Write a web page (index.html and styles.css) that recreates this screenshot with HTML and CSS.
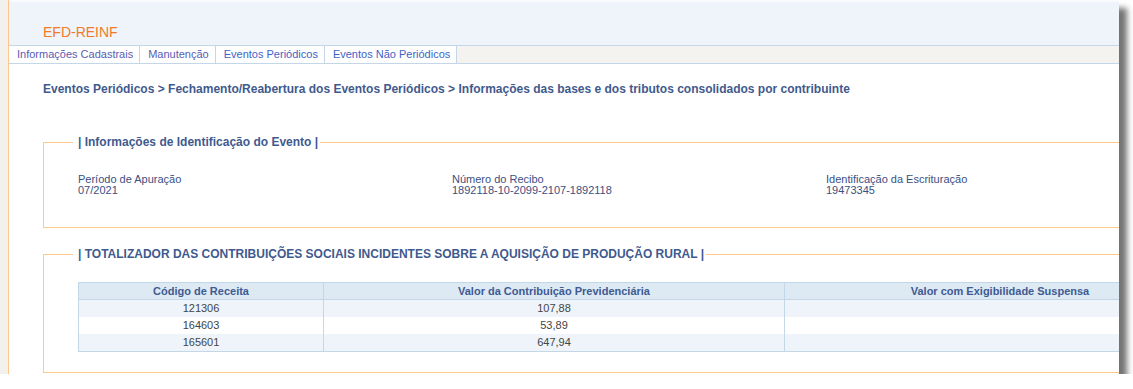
FILE: index.html
```html
<!DOCTYPE html>
<html lang="pt-BR">
<head>
<meta charset="utf-8">
<title>EFD-REINF</title>
<link rel="stylesheet" href="styles.css">
</head>
<body>
<div class="window">
  <div class="gutter"></div>
  <div class="frame">
    <header class="app-header"><span class="app-title">EFD-REINF</span></header>
    <nav class="menu">
      <a class="tab tab-visited" href="#">Informações Cadastrais</a>
      <a class="tab tab-visited" href="#">Manutenção</a>
      <a class="tab" href="#">Eventos Periódicos</a>
      <a class="tab" href="#">Eventos Não Periódicos</a>
    </nav>
    <main class="content">
      <h1 class="breadcrumb">Eventos Periódicos &gt; Fechamento/Reabertura dos Eventos Periódicos &gt; Informações das bases e dos tributos consolidados por contribuinte</h1>

      <fieldset class="box box-id">
        <legend class="box-legend">| Informações de Identificação do Evento |</legend>
        <div class="fields">
          <div class="field"><div class="field-label">Período de Apuração</div><div class="field-value">07/2021</div></div>
          <div class="field"><div class="field-label">Número do Recibo</div><div class="field-value">1892118-10-2099-2107-1892118</div></div>
          <div class="field"><div class="field-label">Identificação da Escrituração</div><div class="field-value">19473345</div></div>
        </div>
      </fieldset>

      <fieldset class="box box-total">
        <legend class="box-legend">| TOTALIZADOR DAS CONTRIBUIÇÕES SOCIAIS INCIDENTES SOBRE A AQUISIÇÃO DE PRODUÇÃO RURAL |</legend>
        <table class="grid">
          <colgroup>
            <col class="c1"><col class="c2"><col class="c3">
          </colgroup>
          <thead>
            <tr><th>Código de Receita</th><th>Valor da Contribuição Previdenciária</th><th>Valor com Exigibilidade Suspensa</th></tr>
          </thead>
          <tbody>
            <tr class="odd"><td>121306</td><td>107,88</td><td></td></tr>
            <tr><td>164603</td><td>53,89</td><td></td></tr>
            <tr class="odd"><td>165601</td><td>647,94</td><td></td></tr>
          </tbody>
        </table>
      </fieldset>
    </main>
  </div>
</div>
</body>
</html>
```

FILE: styles.css
```css
html, body {
  margin: 0;
  padding: 0;
  background: #ffffff;
  font-family: "Liberation Sans", Arial, sans-serif;
}

.window {
  display: flex;
  width: 1119px;
  height: 374px;
  overflow: hidden;
  background: #ffffff;
  box-shadow: 8px 8px 6px rgba(0, 0, 0, 0.55);
}

.gutter {
  flex: none;
  width: 8px;
  background: #f3f1ee;
}

.frame {
  flex: 1;
  min-width: 0;
  overflow: hidden;
  border-left: 1px solid #fcc68c;
  display: flex;
  flex-direction: column;
}

.app-header {
  flex: none;
  box-sizing: border-box;
  height: 46px;
  border-top: 2px solid #f8fafc;
  border-bottom: 1px solid #c3d7e6;
  background: #eef4f9;
  padding: 0 0 5px 34px;
  display: flex;
  align-items: flex-end;
}

.app-title {
  font-size: 14px;
  line-height: 16px;
  color: #f07a2a;
}

.menu {
  flex: none;
  display: flex;
  height: 17px;
  background: #f4f3ef;
  border-bottom: 1px solid #c3d7e6;
}

.tab {
  display: block;
  font-size: 11px;
  line-height: 17px;
  padding: 0 6px 0 8px;
  background: #ffffff;
  border-right: 1px solid #c3d7e6;
  color: #3d63c5;
  text-decoration: none;
  white-space: nowrap;
}

.tab-visited {
  color: #5a5cb3;
}

.content {
  padding: 18px 0 0 34px;
}

.breadcrumb {
  margin: 0;
  font-size: 12px;
  line-height: 14px;
  font-weight: bold;
  color: #3f5a8e;
  white-space: nowrap;
}

.box {
  box-sizing: border-box;
  width: 1192px;
  min-width: 0;
  margin: 39px 0 0;
  padding: 0 34px 32px;
  border: 1px solid #fdc88c;
}

.box-legend {
  font-size: 12px;
  line-height: 14px;
  font-weight: bold;
  color: #3f5a8e;
  padding: 0 2px 0 5px;
  margin-left: -5px;
  white-space: nowrap;
}

.fields {
  display: grid;
  grid-template-columns: repeat(3, 374px);
  margin-top: 25px;
  font-size: 11px;
  line-height: 11px;
  color: #3b4f82;
}

.box-total {
  margin-top: 19px;
  padding-bottom: 20px;
}

.box-id {
  padding-bottom: 31px;
}

.grid {
  margin-top: 21px;
  width: 1138px;
  table-layout: fixed;
  border-collapse: separate;
  border-spacing: 0;
  border: 1px solid #c3d7e7;
  font-size: 11px;
}

.grid .c1 { width: 244px; }
.grid .c2 { width: 461px; }

.grid th {
  height: 16px;
  line-height: 16px;
  padding: 0;
  background: #dde9f3;
  color: #3f5b92;
  font-weight: bold;
  border-bottom: 1px solid #c3d7e7;
  text-align: center;
}

.grid td {
  height: 17px;
  line-height: 17px;
  padding: 0;
  text-align: center;
  color: #444444;
  background: #ffffff;
}

.grid tr.odd td {
  background: #eef4f9;
}

.grid th + th,
.grid td + td {
  border-left: 1px solid #c3d7e7;
}
```
